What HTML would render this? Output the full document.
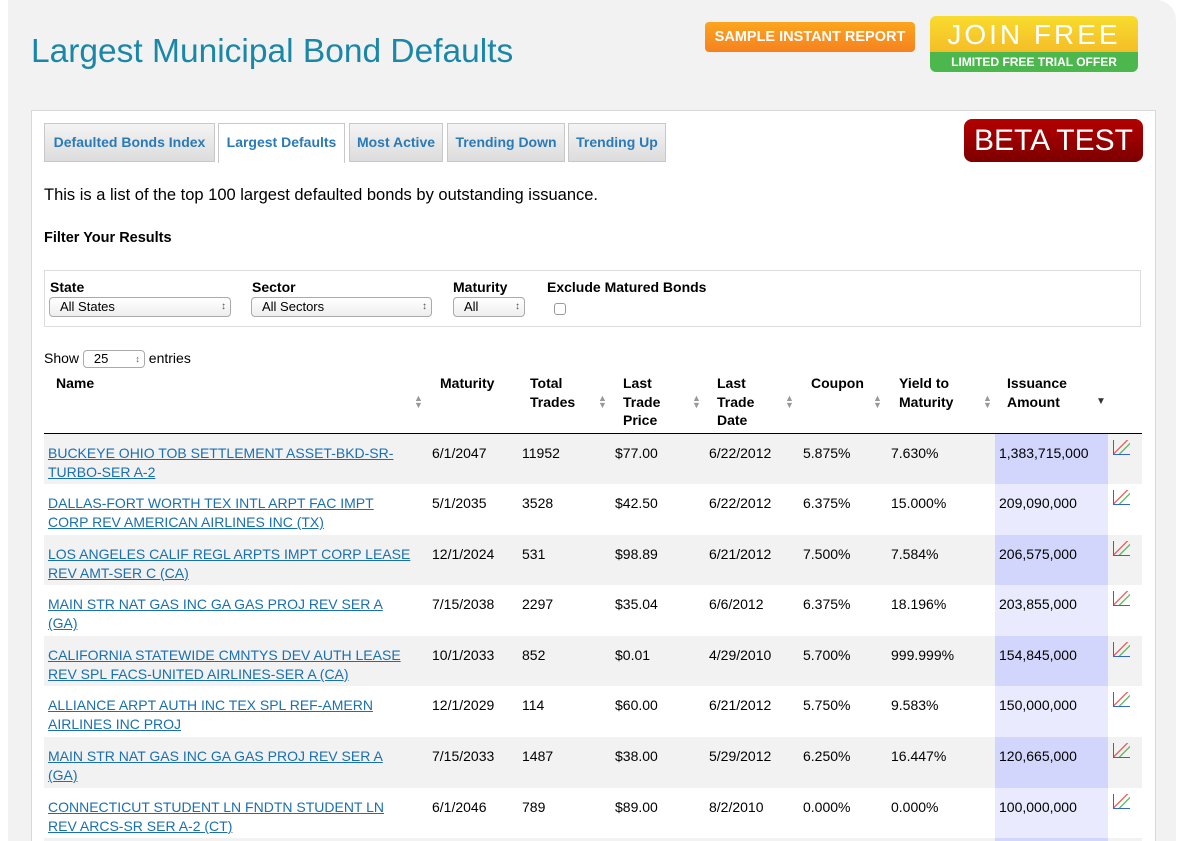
<!DOCTYPE html>
<html style="width:1178px;height:841px;overflow:hidden"><head><style>
*{margin:0;padding:0;box-sizing:border-box}
body{width:1178px;height:841px;overflow:hidden;background:#fff;font-family:"Liberation Sans",Arial,sans-serif;font-size:14px;color:#000;position:relative}
#outer{position:absolute;left:8px;top:0;width:1168px;height:841px;background:#f2f2f2;border-radius:0 20px 0 0}
h1{position:absolute;left:31px;top:33px;font-size:33.5px;font-weight:normal;color:#1a87a8}
#sample{position:absolute;left:705px;top:22px;width:210px;height:30px;border-radius:4px;background:linear-gradient(#fca51f,#f5821f);color:#fff;font-weight:bold;font-size:14.5px;text-align:center;line-height:30px}
#join{position:absolute;left:930px;top:16px;width:208px;height:56px;border-radius:6px;overflow:hidden}
#join .t{height:36px;background:linear-gradient(#f8dc2e,#f5bd27);color:#fff;font-size:28px;letter-spacing:3px;text-align:center;line-height:38px}
#join .b{height:20px;background:#4cb74c;color:#fff;font-weight:bold;font-size:12px;text-align:center;line-height:20px}
#box{position:absolute;left:31px;top:110px;width:1125px;height:731px;background:#fff;border:1px solid #d8d8d8;border-bottom:none}
.tab{position:absolute;top:123px;height:39px;border:1px solid #c8c8c8;background:linear-gradient(#f4f4f4,#dcdcdc);color:#2a7ab8;font-weight:bold;font-size:14px;line-height:37px;text-align:center}
.tab.act{background:#fff;border-bottom:none;height:40px}
#beta{position:absolute;left:964px;top:119px;width:179px;height:43px;border-radius:8px;background:linear-gradient(#b40000,#7c0000);color:#fff;font-size:30px;text-align:center;line-height:43px}
.p{position:absolute;left:44px}
#filter{position:absolute;left:44px;top:270px;width:1097px;height:57px;border:1px solid #ddd}
.fl{position:absolute;top:279px;font-weight:bold;font-size:14px}
.sel{position:absolute;top:297px;height:20px;border:1px solid #aaa;border-radius:4px;background:linear-gradient(#fff,#eee);font-size:13px;padding-left:10px;line-height:18px}
.sel:after{content:"\2195";position:absolute;right:4px;top:0;font-size:10px;color:#555}
.th{position:absolute;top:374px;font-weight:bold;font-size:14px;line-height:18.5px}
.ar{position:absolute;top:395px;font-size:9px;color:#999;line-height:7px}
#tw{position:absolute;left:44px;top:433px;width:1098px;height:408px;overflow:hidden}
table{width:1098px;border-collapse:collapse;border-top:1px solid #000}
td{height:50.6px;vertical-align:top;padding-top:10px;font-size:14px;line-height:19px}
tr:nth-child(odd) td{background:#f2f2f2}
tr:nth-child(odd) td.h{background:#d3d6fc}
td.h{background:#e9eafd}
td.n{padding-left:4px;padding-right:20px}
a{color:#1a6fb0;text-decoration:underline}
td:last-child{font-size:0;padding-left:5px;padding-top:6px}
td:last-child:before{content:"";display:inline-block;width:16px;height:14px;border-left:1px solid #36c;border-bottom:1px solid #36c;background:linear-gradient(135deg,transparent 40%,#e33 45%,transparent 50%,transparent 60%,#3a3 65%,transparent 70%)}
</style></head><body>
<div id="outer"></div>
<h1>Largest Municipal Bond Defaults</h1>
<div id="sample">SAMPLE INSTANT REPORT</div>
<div id="join"><div class="t">JOIN FREE</div><div class="b">LIMITED FREE TRIAL OFFER</div></div>
<div id="box"></div>
<div class="tab" style="left:44px;width:171px">Defaulted Bonds Index</div>
<div class="tab act" style="left:218px;width:127px">Largest Defaults</div>
<div class="tab" style="left:349px;width:94px">Most Active</div>
<div class="tab" style="left:447px;width:118px">Trending Down</div>
<div class="tab" style="left:568px;width:98px">Trending Up</div>
<div id="beta">BETA TEST</div>
<div class="p" style="top:186px;font-size:16.5px">This is a list of the top 100 largest defaulted bonds by outstanding issuance.</div>
<div class="p" style="top:230px;font-weight:bold;font-size:14.5px">Filter Your Results</div>
<div id="filter"></div>
<div class="fl" style="left:50px">State</div>
<div class="fl" style="left:252px">Sector</div>
<div class="fl" style="left:453px">Maturity</div>
<div class="fl" style="left:547px">Exclude Matured Bonds</div>
<div class="sel" style="left:49px;width:182px">All States</div>
<div class="sel" style="left:251px;width:181px">All Sectors</div>
<div class="sel" style="left:453px;width:72px">All</div>
<div style="position:absolute;left:554px;top:303px;width:12px;height:12px;border:1px solid #999;border-radius:3px;background:#fff"></div>
<div class="p" style="top:350px">Show <span style="display:inline-block;width:62px;height:18px;border:1px solid #aaa;border-radius:4px;font-size:13px;padding-left:10px;line-height:16px;vertical-align:middle;position:relative">25<span style="position:absolute;right:4px;font-size:9px;color:#555">&#8597;</span></span> entries</div>
<div class="th" style="left:56px">Name</div>
<div class="th" style="left:440px">Maturity</div>
<div class="th" style="left:530px">Total<br>Trades</div>
<div class="th" style="left:623px">Last<br>Trade<br>Price</div>
<div class="th" style="left:717px">Last<br>Trade<br>Date</div>
<div class="th" style="left:811px">Coupon</div>
<div class="th" style="left:899px">Yield to<br>Maturity</div>
<div class="th" style="left:1007px">Issuance<br>Amount</div>
<div class="ar" style="left:414px">▲<br>▼</div>
<div class="ar" style="left:598px">▲<br>▼</div>
<div class="ar" style="left:692px">▲<br>▼</div>
<div class="ar" style="left:785px">▲<br>▼</div>
<div class="ar" style="left:873px">▲<br>▼</div>
<div class="ar" style="left:983px">▲<br>▼</div>
<div style="position:absolute;left:1096px;top:396px;font-size:10px;color:#333">▼</div>
<div id="tw"><table>
<colgroup><col style="width:388px"><col style="width:90px"><col style="width:93px"><col style="width:94px"><col style="width:94px"><col style="width:88px"><col style="width:104px"><col style="width:113px"><col></colgroup>
<tbody>
<tr><td class="n"><a>BUCKEYE OHIO TOB SETTLEMENT ASSET-BKD-SR-TURBO-SER A-2</a></td><td>6/1/2047</td><td>11952</td><td>$77.00</td><td>6/22/2012</td><td>5.875%</td><td>7.630%</td><td class="h" style="padding-left:4px">1,383,715,000</td><td>I</td></tr>
<tr><td class="n"><a>DALLAS-FORT WORTH TEX INTL ARPT FAC IMPT CORP REV AMERICAN AIRLINES INC (TX)</a></td><td>5/1/2035</td><td>3528</td><td>$42.50</td><td>6/22/2012</td><td>6.375%</td><td>15.000%</td><td class="h" style="padding-left:4px">209,090,000</td><td>I</td></tr>
<tr><td class="n"><a>LOS ANGELES CALIF REGL ARPTS IMPT CORP LEASE REV AMT-SER C (CA)</a></td><td>12/1/2024</td><td>531</td><td>$98.89</td><td>6/21/2012</td><td>7.500%</td><td>7.584%</td><td class="h" style="padding-left:4px">206,575,000</td><td>I</td></tr>
<tr><td class="n"><a>MAIN STR NAT GAS INC GA GAS PROJ REV SER A (GA)</a></td><td>7/15/2038</td><td>2297</td><td>$35.04</td><td>6/6/2012</td><td>6.375%</td><td>18.196%</td><td class="h" style="padding-left:4px">203,855,000</td><td>I</td></tr>
<tr><td class="n"><a>CALIFORNIA STATEWIDE CMNTYS DEV AUTH LEASE REV SPL FACS-UNITED AIRLINES-SER A (CA)</a></td><td>10/1/2033</td><td>852</td><td>$0.01</td><td>4/29/2010</td><td>5.700%</td><td>999.999%</td><td class="h" style="padding-left:4px">154,845,000</td><td>I</td></tr>
<tr><td class="n"><a>ALLIANCE ARPT AUTH INC TEX SPL REF-AMERN AIRLINES INC PROJ</a></td><td>12/1/2029</td><td>114</td><td>$60.00</td><td>6/21/2012</td><td>5.750%</td><td>9.583%</td><td class="h" style="padding-left:4px">150,000,000</td><td>I</td></tr>
<tr><td class="n"><a>MAIN STR NAT GAS INC GA GAS PROJ REV SER A (GA)</a></td><td>7/15/2033</td><td>1487</td><td>$38.00</td><td>5/29/2012</td><td>6.250%</td><td>16.447%</td><td class="h" style="padding-left:4px">120,665,000</td><td>I</td></tr>
<tr><td class="n"><a>CONNECTICUT STUDENT LN FNDTN STUDENT LN REV ARCS-SR SER A-2 (CT)</a></td><td>6/1/2046</td><td>789</td><td>$89.00</td><td>8/2/2010</td><td>0.000%</td><td>0.000%</td><td class="h" style="padding-left:4px">100,000,000</td><td>I</td></tr>
<tr><td></td><td></td><td></td><td></td><td></td><td></td><td></td><td class="h"></td><td></td></tr>
</tbody></table></div>
</body></html>
